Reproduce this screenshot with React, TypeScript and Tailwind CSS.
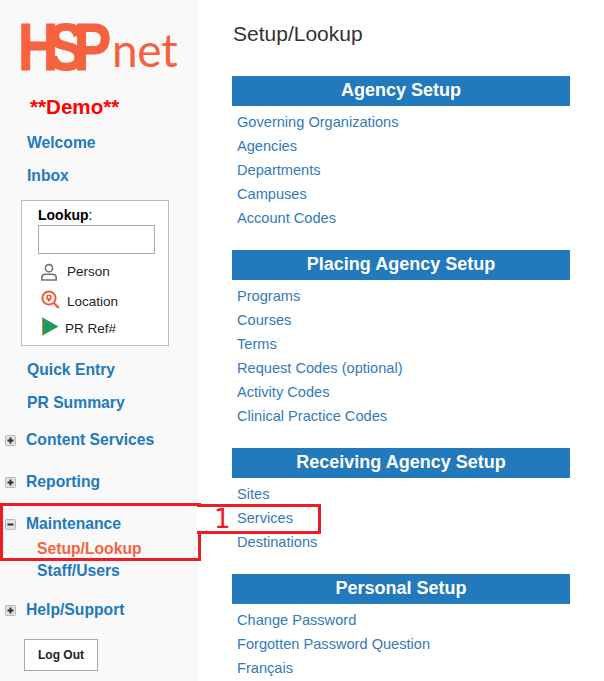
const sections = [
  {
    title: "Agency Setup",
    links: ["Governing Organizations", "Agencies", "Departments", "Campuses", "Account Codes"],
  },
  {
    title: "Placing Agency Setup",
    links: ["Programs", "Courses", "Terms", "Request Codes (optional)", "Activity Codes", "Clinical Practice Codes"],
  },
  {
    title: "Receiving Agency Setup",
    links: ["Sites", "Services", "Destinations"],
  },
  {
    title: "Personal Setup",
    links: ["Change Password", "Forgotten Password Question", "Français"],
  },
];

const TreeBox = ({ open }: { open?: boolean }) => (
  <svg width="11" height="11" viewBox="0 0 11 11" className="shrink-0">
    <rect x="0.5" y="0.5" width="10" height="10" rx="1" fill="#dfe3e6" stroke="#b4b9bd" />
    <rect x="2.5" y="4.5" width="6" height="2" fill="#333" />
    {open ? null : <rect x="4.5" y="2.5" width="2" height="6" fill="#333" />}
  </svg>
);

const TreeItem = ({ label, open, className }: { label: string; open?: boolean; className: string }) => (
  <div className={`flex h-5 items-center pl-[5px] ${className}`}>
    <TreeBox open={open} />
    <a className="ml-[10px] text-[15.7px] font-bold text-[#2279bc]">{label}</a>
  </div>
);

const NavLink = ({ label, className }: { label: string; className: string }) => (
  <a className={`block h-5 pl-[27px] text-[15.7px] leading-5 font-bold text-[#2279bc] ${className}`}>{label}</a>
);

const PersonIcon = () => (
  <svg width="18" height="18" viewBox="0 0 18 18" fill="none" stroke="#6b7280" strokeWidth="1.6">
    <circle cx="9" cy="5.2" r="3.6" />
    <path d="M1.8 17v-2.4c0-2.2 2-3.4 4-3.4h6.4c2 0 4 1.2 4 3.4V17z" />
  </svg>
);

const LocationIcon = () => (
  <svg width="19" height="19" viewBox="0 0 19 19" fill="none" stroke="#f4593c" strokeWidth="2">
    <circle cx="8" cy="8" r="6.6" />
    <path d="M12.8 13l5 5" strokeWidth="2.4" />
    <path
      d="M8 12c-1.6-2-2.8-3.2-2.8-4.8a2.8 2.8 0 0 1 5.6 0C10.800 8.800 9.600 10 8 12z"
      fill="#f4593c"
      stroke="none"
    />
    <circle cx="8" cy="7.200" r="1.100" fill="#fff" stroke="none" />
  </svg>
);

const PlayIcon = () => (
  <svg width="17" height="19" viewBox="0 0 17 19">
    <path d="M0.500 0.500L16.500 9.500L0.500 18.500z" fill="#219a5b" />
    <rect x="0" y="0.500" width="1" height="18" fill="#d08a3a" />
  </svg>
);

const LookupBox = () => (
  <div className="mt-[14px] ml-[21px] h-[146px] w-[148px] border border-[#bdbdbd] bg-white pt-[6px] pl-[16px]">
    <div className="h-[17px] text-[14px] leading-[17px] text-black">
      <b>Lookup</b>:
    </div>
    <div className="mt-[1px] h-[29px] w-[117px] border border-[#aaaaaa] bg-white" />
    <div className="mt-[8px] flex h-[20px] items-center text-[13.5px] text-[#222]">
      <span className="flex w-[29px] pl-[2px]">
        <PersonIcon />
      </span>
      Person
    </div>
    <div className="mt-[10px] flex h-[20px] items-center text-[13.5px] text-[#222]">
      <span className="flex w-[29px] -translate-y-[3px] pl-[3px]">
        <LocationIcon />
      </span>
      Location
    </div>
    <div className="mt-[7px] flex h-[20px] items-center text-[13.5px] text-[#222]">
      <span className="flex w-[27px] -translate-y-[3px] pl-[4px]">
        <PlayIcon />
      </span>
      PR Ref#
    </div>
  </div>
);

const Logo = () => (
  <div className="ml-[18px] flex h-[48px] items-end text-[#f66240] select-none">
    <span className="block h-[48px] w-[94px] origin-left scale-x-[0.85] text-[66px] leading-[48px] font-bold tracking-[-13px] font-['Liberation_Sans',sans-serif] [-webkit-text-stroke:1px_#f66240]">
      HSP
    </span>
    <span className="text-[46px] leading-[42px] font-normal tracking-[-0.3px] font-['Lato',sans-serif]">net</span>
  </div>
);

export default function App() {
  return (
    <div className="relative flex h-[681px] w-[604px] overflow-hidden bg-white font-['Liberation_Sans',Arial,sans-serif]">
      <aside className="h-full w-[199px] shrink-0 bg-[#f9f9f9] pt-[23px]">
        <Logo />
        <div className="mt-[24px] h-6 pl-[30px] text-[20.6px] leading-6 font-bold text-[#ff0000]">**Demo**</div>
        <NavLink label="Welcome" className="mt-[14px]" />
        <NavLink label="Inbox" className="mt-[13px]" />
        <LookupBox />
        <NavLink label="Quick Entry" className="mt-[14px]" />
        <NavLink label="PR Summary" className="mt-[13px]" />
        <TreeItem label="Content Services" className="mt-[17px]" />
        <TreeItem label="Reporting" className="mt-[22px]" />
        <TreeItem label="Maintenance" open className="mt-[22px]" />
        <a className="mt-[5px] block h-5 pl-[37px] text-[15.7px] leading-5 font-bold text-[#f66240]">Setup/Lookup</a>
        <a className="mt-[2px] block h-5 pl-[37px] text-[15.7px] leading-5 font-bold text-[#2279bc]">Staff/Users</a>
        <TreeItem label="Help/Support" className="mt-[19px]" />
        <button className="mt-[19px] ml-[24px] h-[32px] w-[74px] border border-[#aaaaaa] bg-white text-[12px] font-bold text-[#222]">
          Log Out
        </button>
      </aside>

      <main className="ml-[33px] w-[338px] shrink-0 pt-[22px]">
        <h1 className="h-6 pl-px text-[21px] leading-6 font-normal text-[#333]">Setup/Lookup</h1>
        <div className="mt-[30px] flex flex-col gap-5">
          {sections.map((section) => (
            <section key={section.title}>
              <div className="h-[30px] bg-[#2279bc] text-center text-[18px] leading-[28px] font-bold text-white">
                {section.title}
              </div>
              <ul className="pt-1 pl-[5px]">
                {section.links.map((link) => (
                  <li key={link} className="h-6 text-[14.6px] leading-6 text-[#337ab7]">
                    {link}
                  </li>
                ))}
              </ul>
            </section>
          ))}
        </div>
      </main>

      {/* red annotation markup lying over the page */}
      <div className="absolute top-[503px] left-0 h-[58px] w-[201px] border-[3px] border-[#ed1c24]" />
      <div className="absolute top-[507px] left-[197px] h-[24px] w-[4px] bg-white" />
      <div className="absolute top-[504px] left-[197px] h-[30px] w-[124px] border-[3px] border-l-0 border-[#ed1c24]" />
      <div className="absolute top-[504px] left-[214px] text-[26px] leading-[30px] text-[#ed1c24] font-['DejaVu_Sans',sans-serif]">
        1
      </div>
    </div>
  );
}
